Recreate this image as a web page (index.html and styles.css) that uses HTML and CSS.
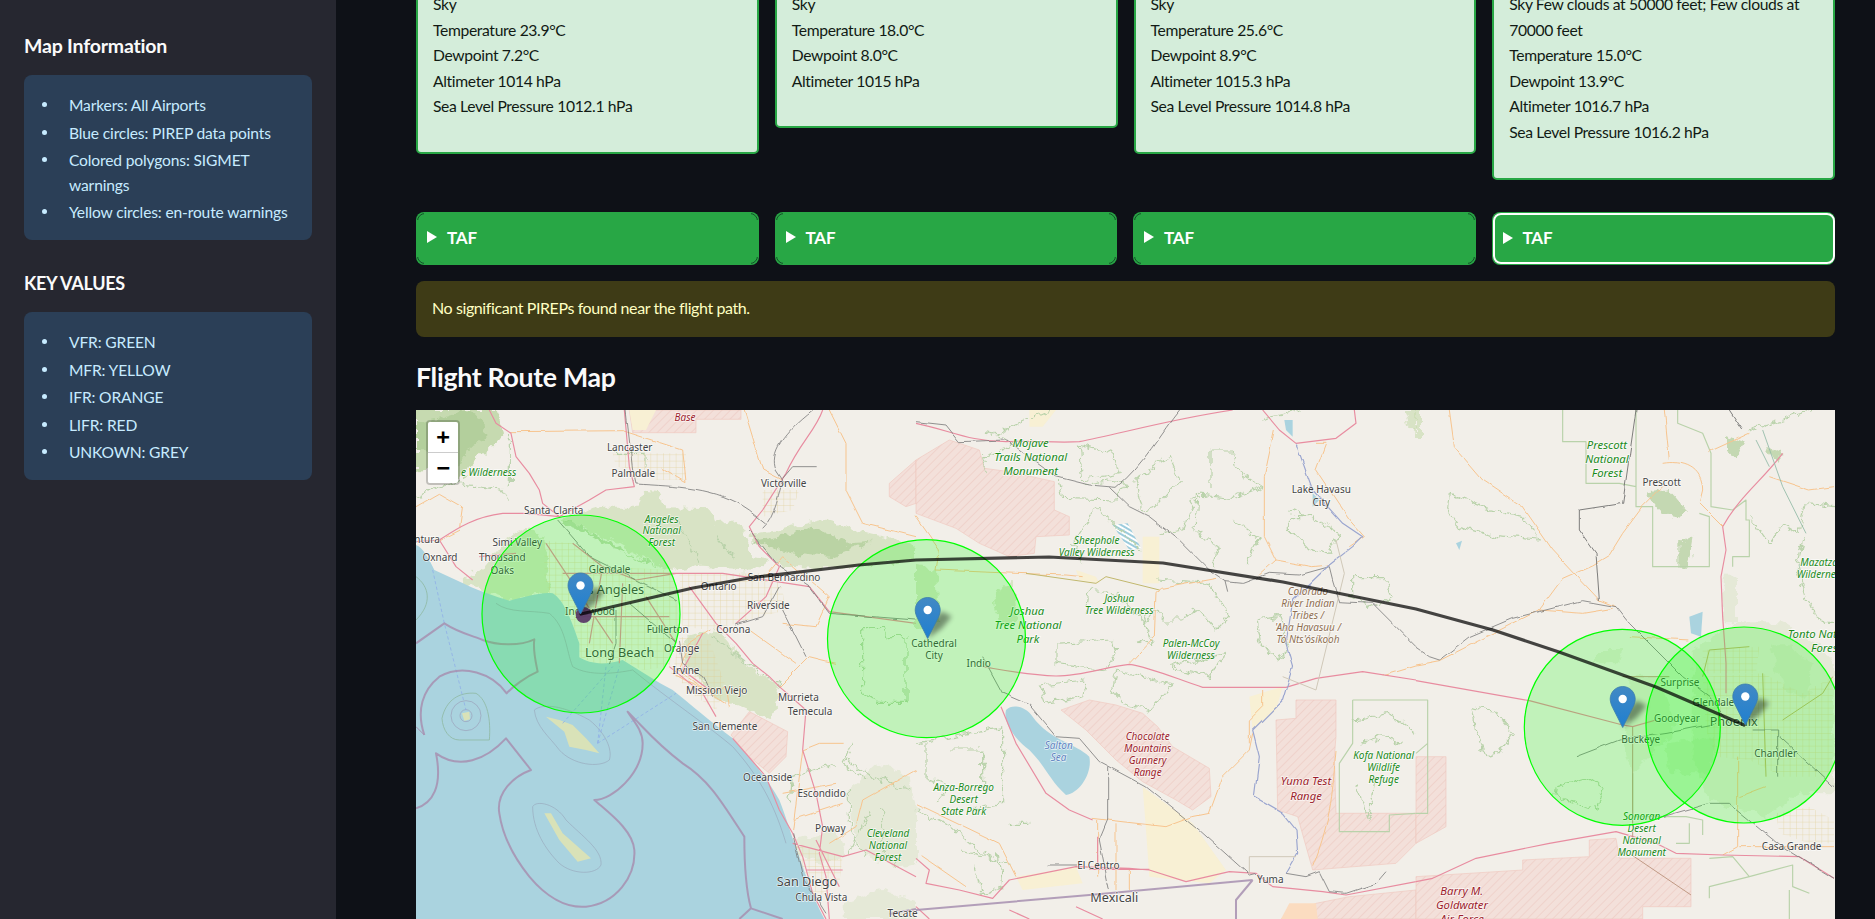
FILE: index.html
```html
<!DOCTYPE html>
<html lang="en">
<head>
    <meta charset="UTF-8">
    <meta name="viewport" content="width=device-width, initial-scale=1.0">
    <title>Flight Route Map</title>
    <link rel="stylesheet" href="styles.css">
</head>
<body>
<div class="app">
    <aside class="sidebar">
        <h3>Map Information</h3>
        <div class="info-box">
            <ul>
                <li>Markers: All Airports</li>
                <li>Blue circles: PIREP data points</li>
                <li>Colored polygons: SIGMET warnings</li>
                <li>Yellow circles: en-route warnings</li>
            </ul>
        </div>
        <h3 class="second">KEY VALUES</h3>
        <div class="info-box">
            <ul>
                <li>VFR: GREEN</li>
                <li>MFR: YELLOW</li>
                <li>IFR: ORANGE</li>
                <li>LIFR: RED</li>
                <li>UNKOWN: GREY</li>
            </ul>
        </div>
    </aside>

    <main class="main">
        <div class="columns metar-row">
            <div class="metar-card">
                <p>Sky</p>
                <p>Temperature 23.9°C</p>
                <p>Dewpoint 7.2°C</p>
                <p>Altimeter 1014 hPa</p>
                <p>Sea Level Pressure 1012.1 hPa</p>
            </div>
            <div class="metar-card">
                <p>Sky</p>
                <p>Temperature 18.0°C</p>
                <p>Dewpoint 8.0°C</p>
                <p>Altimeter 1015 hPa</p>
            </div>
            <div class="metar-card">
                <p>Sky</p>
                <p>Temperature 25.6°C</p>
                <p>Dewpoint 8.9°C</p>
                <p>Altimeter 1015.3 hPa</p>
                <p>Sea Level Pressure 1014.8 hPa</p>
            </div>
            <div class="metar-card">
                <p>Sky Few clouds at 50000 feet; Few clouds at 70000 feet</p>
                <p>Temperature 15.0°C</p>
                <p>Dewpoint 13.9°C</p>
                <p>Altimeter 1016.7 hPa</p>
                <p>Sea Level Pressure 1016.2 hPa</p>
            </div>
        </div>

        <div class="columns taf-row">
            <div class="taf"><div class="taf-head"><span class="arrow"></span>TAF</div></div>
            <div class="taf"><div class="taf-head"><span class="arrow"></span>TAF</div></div>
            <div class="taf"><div class="taf-head"><span class="arrow"></span>TAF</div></div>
            <div class="taf focused"><div class="taf-head"><span class="arrow"></span>TAF</div></div>
        </div>

        <div class="warning">No significant PIREPs found near the flight path.</div>

        <h2 class="map-title">Flight Route Map</h2>

        <div class="map">
            <svg class="map-svg" viewBox="0 0 1419 509" width="1419" height="509">
                <defs>
                    <pattern id="hatch" width="18" height="18" patternUnits="userSpaceOnUse" patternTransform="rotate(-45)">
                        <rect width="18" height="18" fill="#f3e0da"/>
                        <line x1="0" y1="0" x2="18" y2="0" stroke="#ecc4bc" stroke-width="3"/>
                    </pattern>
                    <pattern id="grid" width="19" height="19" patternUnits="userSpaceOnUse">
                        <path d="M0 0H19M0 0V19" fill="none" stroke="#e0cd8c" stroke-width="2"/>
                    </pattern>
                    <pattern id="blue-hatch" width="12" height="12" patternUnits="userSpaceOnUse" patternTransform="rotate(30)">
                        <rect width="12" height="12" fill="#fff"/>
                        <rect width="12" height="6" fill="#9ccbdc"/>
                    </pattern>
                    <linearGradient id="pin-fill" x1="0" y1="0" x2="0" y2="1">
                        <stop offset="0" stop-color="#4289c4"/>
                        <stop offset="1" stop-color="#1f7fd0"/>
                    </linearGradient>
                    <filter id="soft" x="-50%" y="-50%" width="200%" height="200%">
                        <feGaussianBlur stdDeviation="2.5"/>
                    </filter>
                    <filter id="rough" filterUnits="userSpaceOnUse" x="-20" y="-20" width="1560" height="1570" color-interpolation-filters="sRGB">
                        <feTurbulence type="fractalNoise" baseFrequency="0.035" numOctaves="3" seed="4"/>
                        <feDisplacementMap in="SourceGraphic" scale="34" xChannelSelector="R" yChannelSelector="G"/>
                    </filter>
                    <filter id="wobble" filterUnits="userSpaceOnUse" x="-20" y="-20" width="1560" height="1570" color-interpolation-filters="sRGB">
                        <feTurbulence type="fractalNoise" baseFrequency="0.02" numOctaves="2" seed="9"/>
                        <feDisplacementMap in="SourceGraphic" scale="12" xChannelSelector="R" yChannelSelector="G"/>
                    </filter>
                    <g id="pin">
                        <path d="M0 0L14 -10 24 -22 14 -27 4 -18Z" fill="#000" opacity=".4" filter="url(#soft)"/>
                        <path d="M0 0L-10.2 -20.2C-11.6 -23 -12.5 -26 -12.5 -28.5 -12.5 -35.4 -6.9 -41 0 -41 6.9 -41 12.5 -35.4 12.5 -28.5 12.5 -26 11.6 -23 10.2 -20.2Z" fill="url(#pin-fill)" stroke="#3a7cab" stroke-width=".8"/>
                        <circle cx="0" cy="-28.5" r="4.2" fill="#fff"/>
                    </g>
                </defs>

                <rect class="land" width="1419" height="509"/>

                <!-- left part of the map: LA to the coast -->
                <g transform="scale(.33333)">
                    <path class="forest-strong" d="M0 0H240L262 70 225 110 170 160 130 215 60 175 0 190Z"/>
                    <path class="forest-dark" d="M0 40L90 20 150 0 200 30 210 90 150 120 130 170 80 130 0 130Z"/>
                    <path class="forest" d="M430 325L560 290 665 290 680 245 730 250 750 292 890 295 900 340 960 330 990 380 1010 440 1060 450 1020 480 850 470 770 480 690 450 600 400 500 350Z"/>
                    <path class="forest" d="M1000 372L1090 360 1220 330 1360 370 1480 400 1500 420V450L1230 475 1100 470 1050 430Z"/>
                    <path class="forest" d="M800 690L900 660 1000 770 1090 835 1070 935 990 900 900 860 810 770Z"/>
                    <path class="forest" d="M130 510L200 470 260 400 330 350 385 390 400 548 280 570 200 545Z"/>
                    <path class="forest-dark" d="M445 325C500 355 580 385 640 440L720 468 700 455 610 425 520 370 445 345Z"/>
                    <path class="forest-dark" d="M1010 395L1090 380 1190 350 1300 400 1370 395 1240 440 1120 430Z"/>
                    <path class="forest-light" d="M1300 1130L1390 1060 1480 1100 1500 1200V1360L1440 1370 1350 1340 1310 1260Z"/>
                    <path class="forest-light" d="M1280 1480L1400 1440 1500 1470V1527H1280Z"/>
                    <path class="forest-light" d="M1130 1290L1260 1260 1290 1330 1240 1360 1150 1340Z"/>
                    <path class="metro" d="M385 392L470 400 560 470 770 480 790 640 760 770 680 780 620 750 550 765 490 740 490 700 470 640 440 580 400 550 385 500Z"/>
                    <path class="metro" d="M790 490L1090 490 1110 600 960 640 880 660 800 650Z"/>
                    <path class="metro" d="M790 680L880 690 930 830 900 900 840 860 770 790Z"/>
                    <path class="metro" d="M1040 240H1150L1130 300 1040 320Z"/>
                    <path class="metro" d="M1110 1300L1280 1340 1270 1420 1190 1470 1150 1360Z"/>
                    <path class="metro" d="M590 130H810V210H720L680 180 600 170Z"/>
                    <path class="hatched" d="M640 0H975V28H840V68H650Z"/>
                    <path class="hatched" d="M1500 150L1420 220 1420 260 1470 290 1500 280Z"/>
                    <path class="hatched" d="M945 975L1000 905 1115 965 1110 1040 1060 1090 1000 1040Z"/>
                    <path class="sand" d="M640 0H720L690 60H650Z"/>

                    <path class="water" d="M0 405C20 410 40 450 55 480L120 510C180 540 240 560 280 572 330 560 380 545 410 550 445 570 470 640 490 700L490 742C520 760 560 768 620 750 670 780 720 815 770 840 820 880 890 940 950 985 1000 1040 1050 1100 1090 1170 1110 1220 1130 1290 1150 1340 1170 1400 1195 1470 1225 1527L0 1527Z"/>
                    <path class="island" d="M390 920L430 930 470 945 510 985 550 1030 510 1020 460 1010 445 965Z"/>
                    <path class="island" d="M385 1210L405 1210 440 1270 525 1345 485 1355 430 1290Z"/>
                    <path class="contour" d="M355 900C380 880 440 885 520 930 570 970 590 1020 580 1050 550 1075 470 1065 430 1020 400 980 360 950 355 900Z"/>
                    <path class="contour" d="M350 1190C360 1170 420 1180 450 1230 500 1280 560 1320 555 1365 540 1395 470 1395 430 1360 390 1320 350 1260 350 1190Z"/>
                    <path class="contour" d="M240 580C280 610 340 600 400 610 450 650 450 720 470 770 520 800 600 790 650 780 760 870 880 950 950 1010 1040 1110 1080 1200 1110 1300"/>
                    <path class="contour-green" d="M78 925C90 870 130 845 180 850 215 870 225 930 220 990L130 990C100 990 80 960 78 925ZM0 500C40 530 50 580 0 630"/>
                    <circle class="contour-purple" cx="150" cy="917" r="45"/>
                    <circle class="contour-purple" cx="150" cy="917" r="18"/>
                    <path class="island" d="M138 910L160 905 162 928 145 932Z"/>
                    <path class="ferry" d="M50 480L85 640 150 900M545 1000L610 770M545 1000L570 770M545 1000L780 850M440 940L590 770"/>
                    <path class="state" d="M0 700L85 640C130 670 180 680 200 690 240 705 310 710 355 688 350 720 360 760 365 785 330 800 290 830 272 850 230 790 140 760 70 800 20 840 0 900 25 975"/>
                    <path class="state" d="M0 1195C50 1180 80 1130 60 1030 130 1080 210 1050 270 985L345 1080C290 1100 240 1150 250 1210 260 1280 300 1350 340 1400 390 1460 450 1495 510 1490 600 1480 660 1400 655 1320 650 1260 580 1210 535 1170 590 1170 680 1090 680 1000 680 960 650 930 635 905 690 960 720 1000 800 1060 880 1110 920 1180 985 1280 985 1360 990 1440 1005 1495L1100 1527M1005 1495L970 1527"/>
                    <path class="state" d="M1420 1512L1500 1497"/>
                    <path class="state-thin" d="M0 950L25 975"/>

                    <path class="park" d="M0 260L100 220 260 240 280 270M280 70V230M590 130H690V170M1290 1050L1370 1100 1480 1140M1360 1200L1300 1330M1300 1130V1260L1350 1340M1400 1200V1320L1450 1370M1340 650V850L1390 880H1470V680H1420L1410 650ZM1250 1060L1130 1100 1120 1180M1310 1000L1280 1060 1350 1110M900 380L960 450M780 330L850 460M1090 830L1010 770 890 680"/>
                    <path class="road-orange" d="M0 290L70 250 140 290 130 360 70 390M285 65L620 62 800 120 810 215 740 175M985 0L1040 180 1100 210M1240 0L1290 100 1290 240 1340 340 1500 380M1050 500L1100 440 1240 560 1200 650 1100 640M1090 830L1180 740 1260 760M1280 1000L1210 1000 1160 1020 1130 1260M1500 1080L1340 1170 1320 1250 1240 1300M880 660L820 700 790 780 850 830 930 880M1000 660L1140 760M770 790L880 850 930 830 940 890M1100 1150L1260 1120M1130 1230L1280 1180"/>
                    <path class="road-pink" d="M220 0L240 40 285 70 300 140 340 190 370 240 380 280 430 320M625 0L640 170 655 230 570 240 520 270 430 320M1220 0C1200 60 1150 100 1110 190L1040 300 1000 350 1030 410 1090 470 1050 560 960 640M0 395L70 390C130 350 180 320 260 310L330 310 430 320M70 390L120 470 170 510M470 400L560 470 660 510 780 490 920 490 1180 530 1240 605 1500 640M760 770L860 850 900 920M820 530L900 640 960 700 1010 760 1060 800 1090 830 1170 900 1160 1020 1200 1150 1220 1250 1210 1330 1230 1400 1240 1527M950 985L1050 1100 1090 1200 1130 1270 1160 1340 1190 1450 1230 1527M390 400L590 700M1130 1300L1280 1340 1350 1320 1500 1400M190 440L300 430M440 490H790M560 470L520 700M620 520L610 760M690 560L780 700M860 670L800 780 880 840M500 620L760 620M1170 1380H1280M1200 1290L1270 1430"/>
                    <path class="rail" d="M630 0L650 180 660 222C780 230 900 230 1000 300L1050 340M1040 355C1080 320 1090 240 1100 210L1080 180C1060 130 1100 70 1190 0M1100 205L1130 170H1205M1000 360L1090 470 1180 530 1240 610 1500 630M1100 600L1170 740M425 330L520 440 780 570M1090 530L1040 620 960 645M600 600L600 700 580 760M640 580L780 700M790 690L800 760 860 800 890 860M1130 1270L1160 1400 1230 1510"/>

                    <text class="city" x="641" y="122">Lancaster</text>
                    <text class="city" x="652" y="202">Palmdale</text>
                    <text class="city" x="1103" y="230">Victorville</text>
                    <text class="city" x="413" y="312">Santa Clarita</text>
                    <text class="city" x="304" y="408">Simi Valley</text>
                    <text class="city" x="33" y="400">ntura</text>
                    <text class="city" x="72" y="454">Oxnard</text>
                    <text class="city" x="259" y="454">Thousand</text>
                    <text class="city" x="259" y="491">Oaks</text>
                    <text class="city" x="581" y="488">Glendale</text>
                    <text class="city big" x="578" y="552">Los Angeles</text>
                    <text class="city" x="522" y="614">Inglewood</text>
                    <text class="city" x="755" y="669">Fullerton</text>
                    <text class="city" x="952" y="668">Corona</text>
                    <text class="city" x="908" y="541">Ontario</text>
                    <text class="city" x="1104" y="513">San Bernardino</text>
                    <text class="city" x="1057" y="597">Riverside</text>
                    <text class="city big" x="611" y="740">Long Beach</text>
                    <text class="city" x="797" y="726">Orange</text>
                    <text class="city" x="810" y="791">Irvine</text>
                    <text class="city" x="902" y="853">Mission Viejo</text>
                    <text class="city" x="1147" y="873">Murrieta</text>
                    <text class="city" x="1182" y="916">Temecula</text>
                    <text class="city" x="927" y="961">San Clemente</text>
                    <text class="city" x="1055" y="1112">Oceanside</text>
                    <text class="city" x="1217" y="1161">Escondido</text>
                    <text class="city" x="1243" y="1265">Poway</text>
                    <text class="city big" x="1173" y="1427">San Diego</text>
                    <text class="city" x="1216" y="1474">Chula Vista</text>
                    <text class="city" x="1460" y="1520">Tecate</text>
                    <text class="base" x="807" y="32">Base</text>
                    <text class="green" x="218" y="199">e Wilderness</text>
                    <text class="green" x="737" y="338">Angeles</text>
                    <text class="green" x="737" y="373">National</text>
                    <text class="green" x="737" y="409">Forest</text>
                    <text class="green" x="1416" y="1282">Cleveland</text>
                    <text class="green" x="1416" y="1318">National</text>
                    <text class="green" x="1416" y="1354">Forest</text>
                </g>

                <!-- middle part: desert, Salton Sea, Colorado river -->
                <g transform="translate(500) scale(.33333)">
                    <path class="hatched" d="M0 150L100 90 130 100 190 120 205 175 280 185 415 215 415 300 460 320 460 375 360 380 355 430 280 440 190 400 120 355 0 310Z"/>
                    <path class="hatched" d="M435 900L520 870 600 885 680 910 725 950 770 1010 880 1075 885 1160 830 1200 780 1170 680 1115 600 1050 510 960Z"/>
                    <path class="hatched" d="M1140 870L1260 870 1260 980 1255 1040 1260 1210 1500 1210V1300L1440 1360 1190 1380 1145 1220 1085 1200 1080 930 1140 925Z"/>
                    <path class="hatched" d="M1500 1440L1300 1460 1200 1480 1095 1527H1500Z"/>
                    <path class="peach" d="M1095 1527L1120 1480 1200 1480 1205 1527Z"/>
                    <path class="sand" d="M680 1130L830 1240 930 1380 880 1420 700 1400 690 1260Z"/>
                    <path class="sand" d="M1000 860L1100 830 1080 900 1010 960Z"/>
                    <path class="sand" d="M680 380H730V520H680Z"/>
                    <path class="sand" d="M340 0H420L380 50H340ZM480 480L540 500 550 520 490 510Z"/>
                    <path class="sand" d="M300 1400L480 1370 500 1420 320 1440Z"/>
                    <path class="forest" d="M0 470L60 480 70 640 0 660Z"/>
                    <path class="forest" d="M230 560L290 510 300 640 250 640Z"/>
                    <path class="forest" d="M1465 0H1500V70L1480 50Z"/>
                    <path class="water" d="M270 900C290 880 330 890 350 920 400 990 480 1000 520 1040 530 1090 490 1150 450 1155 400 1110 390 1070 340 1020 300 990 260 940 270 900Z"/>
                    <path class="water" d="M1190 250L1210 270 1190 290ZM1105 30L1130 30 1130 80 1110 60Z"/>
                    <path class="blue-hatched" d="M590 345L635 340 675 415 640 420Z"/>
                    <path class="park" d="M205 70L290 90 280 110 200 140 210 180M430 210L440 265 600 270 635 220 580 210 500 225M490 105L590 130 610 190 500 210ZM220 80L400 0M660 205L760 140 790 210 720 290 680 300ZM885 240V120H950L960 180 1040 230 950 265 845 255 840 365 910 410 890 470M840 255L800 360 740 370M545 295L470 400 500 460M545 295L600 350 680 420M990 460L1030 390 950 330M1030 30L1160 0M1120 320L1180 320 1270 370 1240 430 1170 410 1120 360ZM720 510L880 520 940 620 900 660 840 595 800 630 740 630 720 600 690 640 680 600M760 770L880 800 930 730 760 770M600 780L770 825 700 900 620 880 590 840ZM370 825L510 810 500 860 390 880ZM420 700L590 690 600 720 570 780 420 760ZM510 610L520 540 600 550 690 640 710 700 660 690M1020 630L1090 620 1120 720 1080 750 1030 690ZM1310 500L1400 500 1430 560 1370 590 1310 560ZM1120 300L1180 320M0 1000L260 950V1180L170 1200M30 1000V1100L100 1130 60 1180M100 1020H200V1130M270 1240L340 1240M140 1320L280 1360M180 1370L200 1450 260 1430 250 1330M0 1200L100 1250 200 1330"/>
                    <path class="park-straight" d="M1310 870H1500M1310 870V1000L1270 1060V1265H1420V1215L1500 1210"/>
                    <path class="park" d="M1310 930L1420 910 1500 970M1340 1000L1400 980 1460 1000M1320 1120L1360 1230M1380 1100L1360 1210"/>
                    <path class="road-orange" d="M640 760L715 680 720 550 740 535 900 505M0 320L70 420 60 480 300 490 450 495 500 500M1030 495L1080 450 1190 470 1240 465M1400 795L1500 765M1260 1020C1250 1130 1250 1220 1190 1370M530 1225L750 1250 830 1220 880 1210 920 1100 1000 1020 1010 970M1075 60L1045 200 1045 380 1080 450M1200 180L1300 330 1345 380 1300 410M1200 100L1230 100 1200 180M545 1230V1400M600 1240V1440M640 1380V1440M0 1180L250 1300 300 1400M1040 840V890L1000 930V1000M20 1340L150 1430"/>
                    <path class="road-olive" d="M330 490L540 520 570 500 730 540"/>
                    <path class="road-pink" d="M200 770C260 780 330 795 420 798 500 798 570 770 640 763 700 770 790 810 860 832L1110 832 1200 805 1340 785 1500 810M0 40C100 60 160 95 270 95 340 90 420 100 490 95 600 75 750 30 950 0M1040 0L1090 60 1140 100 1260 85 1320 40 1315 0M0 1345L40 1380 30 1420 130 1440 230 1465 280 1410 480 1370 640 1375 700 1380 810 1415 940 1385 1020 1390 1070 1430 1220 1445 1290 1455 1500 1415M520 1378H700M545 1280V1370M0 1490L40 1527M255 890L300 1000 390 1150 460 1200 530 1230M280 1500L340 1527M480 1490L560 1527"/>
                    <path class="rail" d="M200 740L260 850 340 885 420 980 490 985 550 1055 690 1130 850 1260 1000 1395 1020 1390M0 35L90 45 130 95 270 90 420 200 520 225 600 232C680 170 740 60 790 0M580 232L640 290 700 320 790 390 880 480 930 515 980 520 1060 490 1150 495 1240 470 1250 510 1270 575 1370 580 1500 710M930 515L938 548M575 1070V1230L550 1290 580 1440M395 1365H480M1110 1390L1170 1400 1210 1385 1240 1445 1290 1450 1380 1420 1410 1385"/>
                    <path class="river" d="M1140 100L1190 240 1280 340 1340 380 1310 410 1240 465 1130 570 1110 700 1130 770 1100 870 1010 960 1030 1040 1015 1160 1100 1210 1140 1260 1145 1330 1110 1390"/>
                    <path class="state" d="M0 1500L520 1455 1010 1410M1010 1410L960 1470 960 1527"/>
                    <path class="boundary-tan" d="M1260 390L1285 490 1200 840 1100 800M1000 1340H1140M1000 1340V1390"/>

                    <text class="city" x="1216" y="250">Lake Havasu</text>
                    <text class="city" x="1216" y="288">City</text>
                    <text class="city" x="54" y="710">Cathedral</text>
                    <text class="city" x="54" y="748">City</text>
                    <text class="city" x="188" y="770">Indio</text>
                    <text class="city" x="547" y="1376">El Centro</text>
                    <text class="city big" x="595" y="1476">Mexicali</text>
                    <text class="city" x="1063" y="1420">Yuma</text>
                    <text class="green big-label" x="344" y="110">Mojave</text>
                    <text class="green big-label" x="344" y="153">Trails National</text>
                    <text class="green big-label" x="344" y="196">Monument</text>
                    <text class="green" x="542" y="402">Sheephole</text>
                    <text class="green" x="542" y="438">Valley Wilderness</text>
                    <text class="green" x="610" y="576">Joshua</text>
                    <text class="green" x="610" y="612">Tree Wilderness</text>
                    <text class="green big-label" x="334" y="615">Joshua</text>
                    <text class="green big-label" x="336" y="658">Tree National</text>
                    <text class="green big-label" x="336" y="700">Park</text>
                    <text class="green" x="825" y="710">Palen-McCoy</text>
                    <text class="green" x="825" y="746">Wilderness</text>
                    <text class="green" x="1403" y="1046">Kofa National</text>
                    <text class="green" x="1403" y="1082">Wildlife</text>
                    <text class="green" x="1403" y="1118">Refuge</text>
                    <text class="green" x="143" y="1143">Anza-Borrego</text>
                    <text class="green" x="143" y="1178">Desert</text>
                    <text class="green" x="143" y="1214">State Park</text>
                    <text class="tribal" x="1176" y="555">Colorado</text>
                    <text class="tribal" x="1176" y="590">River Indian</text>
                    <text class="tribal" x="1176" y="626">Tribes /</text>
                    <text class="tribal" x="1176" y="662">'Aha Havasuu /</text>
                    <text class="tribal" x="1176" y="698">Tó Nts'ósíkooh</text>
                    <text class="lake" x="428" y="1017">Salton</text>
                    <text class="lake" x="428" y="1052">Sea</text>
                    <text class="base" x="695" y="991">Chocolate</text>
                    <text class="base" x="695" y="1026">Mountains</text>
                    <text class="base" x="695" y="1063">Gunnery</text>
                    <text class="base" x="695" y="1098">Range</text>
                    <text class="base big-label" x="1170" y="1126">Yuma Test</text>
                    <text class="base big-label" x="1170" y="1170">Range</text>
                </g>

                <!-- right part: Arizona -->
                <g transform="translate(1000) scale(.33333)">
                    <path class="hatched" d="M0 1400L320 1380V1350L520 1340V1290L600 1285 610 1345H825V1490H680V1527H0Z"/>
                    <path class="hatched" d="M0 1040H90V1250L0 1300Z"/>
                    <path class="forest-light" d="M830 720L960 640H1100L1200 700 1254 760V1150L1150 1150 1050 1220 880 1170 830 1040Z"/>
                    <path class="forest-light" d="M540 720H620L610 760 540 760ZM640 800H730L780 960 650 1090 620 990 640 950Z"/>
                    <path class="forest-light" d="M920 500L960 500V640H920Z"/>
                    <path class="forest-light" d="M750 1000L900 980 880 1090 760 1090Z"/>
                    <path class="forest-light" d="M1060 700H1120L1190 760 1170 870 1100 830Z"/>
                    <path class="forest-dark" d="M690 250L760 240 810 300 790 320 740 310ZM790 400L830 380 815 470 790 470ZM930 80L980 100 960 140 930 120ZM1050 110L1100 130 1080 160Z"/>
                    <path class="forest" d="M0 0H15V90H0Z"/>
                    <path class="metro" d="M860 800L1040 790 1160 850 1250 800V1100H1100L1000 1050 900 1040 870 960Z"/>
                    <path class="metro" d="M860 720L1030 710 1020 790H860Z"/>
                    <path class="metro" d="M1080 1210L1180 1190 1254 1230V1300L1180 1300 1090 1270Z"/>
                    <path class="water" d="M820 620L860 605 855 680 825 670Z"/>
                    <path class="water" d="M120 400L138 392 130 420Z"/>
                    <path class="park" d="M100 250L200 290 320 320 370 390 240 380 130 350 95 300ZM165 890L230 900 290 970 250 1030 210 1040 180 960ZM425 1130L520 1100 565 1130 545 1200 420 1160ZM1000 60L1190 0M1165 380L1140 470 1170 570 1220 640H1254M1000 320L1060 400 1100 340 1150 370 1170 280 1254 290"/>
                    <path class="park-straight" d="M440 0V95L510 95 510 220 610 220 660 230M660 0V290M660 230V290L710 290V470H880V320L850 310M785 0V40L860 70 885 130V290L950 300 990 270V330H1000V440L950 440 950 470M0 870H35V1210H0M0 1030L35 1000M650 1090V1220H810L860 1230 860 1275M780 1300H820V1240M880 1345L950 1340 1000 1400 880 1430 880 1465M1000 1400L1130 1365 1130 1430 1180 1450M1120 1527V1440"/>
                    <path class="road-orange" d="M100 0L115 110 200 210 320 290 410 420 550 570 600 590M0 765L70 752 370 600 440 505 530 465 580 435 620 370 680 290 740 230M370 600L500 610 590 595M640 680L820 690M740 160C800 150 860 170 860 240L850 280 920 350M880 125L1000 70M745 0L760 150M970 1310H1254M965 1040V1310L920 1335M1050 1130L970 1160M1060 200L1180 240 1254 230"/>
                    <path class="road-olive" d="M860 800L880 720 1000 710M1100 930L1220 850 1250 800M1040 790L1050 1100"/>
                    <path class="road-pink" d="M0 812L340 872 620 945 650 950 720 930M0 1415L50 1405 180 1345 400 1300 600 1265 720 1300 780 1330 920 1335 1150 1340 1254 1405M920 350L930 420 915 500 920 620 930 760 930 850M920 350C970 260 1040 210 1100 130 1210 50 1205 0M1015 1060L1165 1280V1340M930 790H1040L1060 940 990 950M890 960L920 1040H1010L1010 1070M1010 980H1190V1010H1010M1060 940L1160 910 1190 960 1190 1010M850 790L830 720 920 720M830 720L770 770 760 890"/>
                    <path class="road-brown" d="M650 950V1220 1290M620 800H730L760 800M640 1330L825 1455"/>
                    <path class="rail" d="M0 712L40 740 70 750 160 680 290 625 500 572 600 590 640 640 800 800 880 860 940 940M480 1040L610 990 750 970 900 940M740 1220L880 1180 940 1180 1100 1310 1254 1405M1010 960H1085V1100M1090 980L1254 1130"/>
                    <path class="rail-dark" d="M660 0L620 280 490 300 490 360 540 430 550 570M940 0L980 60"/>
                    <path class="river-green" d="M1040 60L1100 230 1170 370M1020 90L1060 170"/>

                    <text class="green big-label" x="573" y="116">Prescott</text>
                    <text class="green big-label" x="573" y="159">National</text>
                    <text class="green big-label" x="573" y="202">Forest</text>
                    <text class="city" x="737" y="227">Prescott</text>
                    <text class="green start" x="1153" y="467">Mazatzal</text>
                    <text class="green start" x="1142" y="503">Wilderness</text>
                    <text class="green big-label start" x="1115" y="685">Tonto National</text>
                    <text class="green big-label start" x="1185" y="727">Forest</text>
                    <text class="city" x="792" y="829">Surprise</text>
                    <text class="city" x="892" y="888">Glendale</text>
                    <text class="city" x="783" y="935">Goodyear</text>
                    <text class="city big" x="953" y="948">Phoenix</text>
                    <text class="city" x="674" y="998">Buckeye</text>
                    <text class="city" x="1079" y="1040">Chandler</text>
                    <text class="city" x="1127" y="1320">Casa Grande</text>
                    <text class="green" x="677" y="1231">Sonoran</text>
                    <text class="green" x="677" y="1267">Desert</text>
                    <text class="green" x="677" y="1303">National</text>
                    <text class="green" x="677" y="1339">Monument</text>
                    <text class="base big-label" x="137" y="1455">Barry M.</text>
                    <text class="base big-label" x="138" y="1498">Goldwater</text>
                    <text class="base big-label" x="138" y="1540">Air Force</text>
                </g>

                <!-- overlays -->
                <circle class="range" cx="165" cy="204" r="99"/>
                <circle class="range" cx="510.5" cy="228.7" r="99"/>
                <circle class="range" cx="1206.3" cy="317.3" r="98"/>
                <circle class="range" cx="1328" cy="315" r="98"/>
                <circle class="pirep" cx="167.7" cy="205" r="8"/>
                <polyline class="route" points="165,204 277,178 333,168 443,155 500,150 633,147 747,153 867,172 1000,199 1077,220 1143,242 1240,277 1328,315"/>
                <use href="#pin" x="164.5" y="204"/>
                <use href="#pin" x="511.7" y="228.5"/>
                <use href="#pin" x="1206.7" y="317.5"/>
                <use href="#pin" x="1329.3" y="315"/>
            </svg>
            <div class="zoom-control">
                <div class="zoom-btn">+</div>
                <div class="zoom-btn">−</div>
            </div>
        </div>
    </main>
</div>
</body>
</html>
```

FILE: styles.css
```css
* {
    box-sizing: border-box;
}
html, body {
    margin: 0;
    height: 100%;
    overflow: hidden;
}
body {
    font-family: Lato, "Noto Sans", sans-serif;
    font-size: 16px;
    background: #0e1117;
    color: #fafafa;
}
.app {
    display: flex;
    height: 100vh;
    overflow: hidden;
}

/* sidebar */
.sidebar {
    width: 336px;
    flex: none;
    background: #262730;
    padding: 34px 24px 0;
}
.sidebar h3 {
    margin: 0 0 17px;
    font-size: 19.5px;
    line-height: 24px;
    font-weight: 700;
    letter-spacing: -0.2px;
}
.sidebar h3.second {
    margin-top: 31px;
    font-size: 18px;
    letter-spacing: -0.3px;
}
.info-box {
    background: #2b3f57;
    color: #c7ebff;
    border-radius: 8px;
    padding: 18px 16px 15.4px;
    font-size: 15.6px;
    line-height: 24.4px;
    letter-spacing: -0.15px;
}
.info-box ul {
    margin: 0;
    padding: 0 0 0 29px;
    list-style: none;
}
.info-box li {
    position: relative;
    margin-bottom: 3.2px;
}
.info-box li:last-child {
    margin-bottom: 0;
}
.info-box li::before {
    content: "";
    position: absolute;
    left: -27px;
    top: 9px;
    width: 5px;
    height: 5px;
    border-radius: 50%;
    background: #c7ebff;
}

/* main area, scrolled down a bit like the original */
.main {
    flex: 1;
    min-width: 0;
    padding: 0 40px 0 80px;
}
.columns {
    display: flex;
    gap: 16px;
    align-items: flex-start;
}
.columns > * {
    flex: 1 1 0;
    min-width: 0;
}
.metar-row {
    margin-top: -26px;
}
.metar-card {
    background: #d4edda;
    border: 2px solid #28a745;
    border-radius: 5px;
    color: #111a14;
    padding: 16px 15px 32px;
    font-size: 15.7px;
    line-height: 25.6px;
    letter-spacing: -0.36px;
}
.metar-card p {
    margin: 0;
}
.taf-row {
    margin-top: 32.4px;
}
.taf {
    position: relative;
    height: 53px;
    background: #28a745;
    border-radius: 8px;
}
.taf::before {
    content: "";
    position: absolute;
    inset: 1px;
    border: 1px solid #14502a;
    border-radius: 8px;
}
.taf-head {
    position: relative;
    display: flex;
    align-items: center;
    gap: 10px;
    height: 100%;
    padding: 0 0 2px 11px;
    font-size: 17px;
    font-weight: 700;
    color: #fff;
    background:
        linear-gradient(#28a745, #28a745) center / calc(100% - 16px) 100% no-repeat,
        linear-gradient(#28a745, #28a745) center / 100% calc(100% - 16px) no-repeat;
    letter-spacing: -0.2px;
}
.taf.focused {
    padding: 1px 0 1px 1px;
}
.taf.focused .taf-head {
    border: 2px solid #fff;
    border-radius: 8px;
    padding: 0 0 1px 8px;
}
.arrow {
    width: 0;
    height: 0;
    border-left: 10px solid #fff;
    border-top: 6px solid transparent;
    border-bottom: 6px solid transparent;
}
.warning {
    margin-top: 16px;
    height: 56px;
    padding: 0 16px 2px;
    display: flex;
    align-items: center;
    background: #3e3b16;
    color: #ffffc2;
    border-radius: 8px;
    letter-spacing: -0.4px;
}
.map-title {
    margin: 0;
    padding-top: 23px;
    height: 73px;
    font-size: 26.7px;
    line-height: 34px;
    font-weight: 700;
    letter-spacing: -0.3px;
}

/* map */
.map {
    position: relative;
    height: 509px;
    overflow: hidden;
    background: #f2efe9;
}
.map-svg {
    display: block;
}
.zoom-control {
    position: absolute;
    left: 10px;
    top: 10px;
    border: 2px solid rgba(0,0,0,0.2);
    border-radius: 4px;
    background-clip: padding-box;
}
.zoom-btn {
    width: 30px;
    height: 30px;
    background: #fff;
    color: #000;
    text-align: center;
    font: bold 22px/30px "DejaVu Sans Mono", monospace;
}
.zoom-btn:first-child {
    border-bottom: 1px solid #ccc;
    height: 31px;
    border-radius: 2px 2px 0 0;
}
.zoom-btn:last-child {
    border-radius: 0 0 2px 2px;
}

.land { fill: #f2efe9; }
.water { fill: #aad3df; }
.island { fill: #d9e2b8; }
.forest { fill: #c8dcae; opacity: 0.6; filter: url(#rough); }
.forest-strong { fill: #bcd6a2; opacity: 0.8; filter: url(#rough); }
.forest-light { fill: #cfe0b8; opacity: 0.35; filter: url(#rough); }
.forest-dark { fill: #a7c98f; opacity: 0.6; filter: url(#rough); }
.sand { fill: #f8f0d4; }
.peach { fill: #fbdcc0; }
.metro { fill: url(#grid); opacity: 0.85; }
.hatched { fill: url(#hatch); stroke: #f0c8c0; stroke-width: 2; }
.blue-hatched { fill: url(#blue-hatch); }

.map-svg path, .map-svg circle {
    stroke-linejoin: round;
}
.contour, .contour-green, .contour-purple, .park, .park-straight, .road-orange, .road-olive, .road-pink, .road-brown,
.rail, .rail-dark, .river, .river-green, .state, .state-thin, .ferry, .boundary-tan {
    fill: none;
}
.contour { stroke: #99a9bd; stroke-width: 2; }
.contour-green { stroke: #8fb9a4; stroke-width: 2.5; }
.contour-purple { fill: none; stroke: #9a9fb8; stroke-width: 2; }
.park { stroke: #b9d2aa; stroke-width: 3.5; filter: url(#rough); }
.park-straight { stroke: #b9d2aa; stroke-width: 3.5; }
.road-orange { stroke: #f7c48e; stroke-width: 3; filter: url(#wobble); }
.road-olive { stroke: #c2b86d; stroke-width: 3; }
.road-pink { stroke: #e88ca0; stroke-width: 3.5; }
.road-brown { stroke: #c09a85; stroke-width: 3; }
.rail { stroke: #7d7d7d; stroke-width: 2.5; filter: url(#wobble); }
.rail-dark { stroke: #666; stroke-width: 2.5; filter: url(#wobble); }
.river { stroke: #9aa5cf; stroke-width: 3.5; filter: url(#wobble); }
.river-green { stroke: #8fb8a5; stroke-width: 2.5; }
.state { stroke: #a78fb0; stroke-width: 6; opacity: 0.85; }
.state-thin { stroke: #a78fb0; stroke-width: 3; }
.ferry { stroke: #8aa8e8; stroke-width: 2; stroke-dasharray: 10 7; }
.boundary-tan { stroke: #d0c8b8; stroke-width: 3; }

.map-svg text {
    font-family: "Noto Sans", sans-serif;
    font-size: 30px;
    text-anchor: middle;
    paint-order: stroke;
    stroke: rgba(255,255,255,0.75);
    stroke-width: 4px;
}
.map-svg text.city { fill: #444; }
.map-svg text.big { font-size: 38px; }
.map-svg text.green { fill: #1a8a1a; font-style: italic; }
.map-svg text.base { fill: #9c1c2c; font-style: italic; }
.map-svg text.tribal { fill: #8f6f52; font-style: italic; }
.map-svg text.lake { fill: #5f83c0; font-style: italic; }
.map-svg text.big-label { font-size: 34px; }
.map-svg text.start { text-anchor: start; }

.range {
    fill: #00ff00;
    fill-opacity: 0.2;
    stroke: #00ff00;
    stroke-width: 1.2;
}
.pirep {
    fill: #5c3b68;
    fill-opacity: 0.95;
}
.route {
    fill: none;
    stroke: #000;
    stroke-opacity: 0.72;
    stroke-width: 3.2;
    stroke-linejoin: round;
    stroke-linecap: round;
}
```
